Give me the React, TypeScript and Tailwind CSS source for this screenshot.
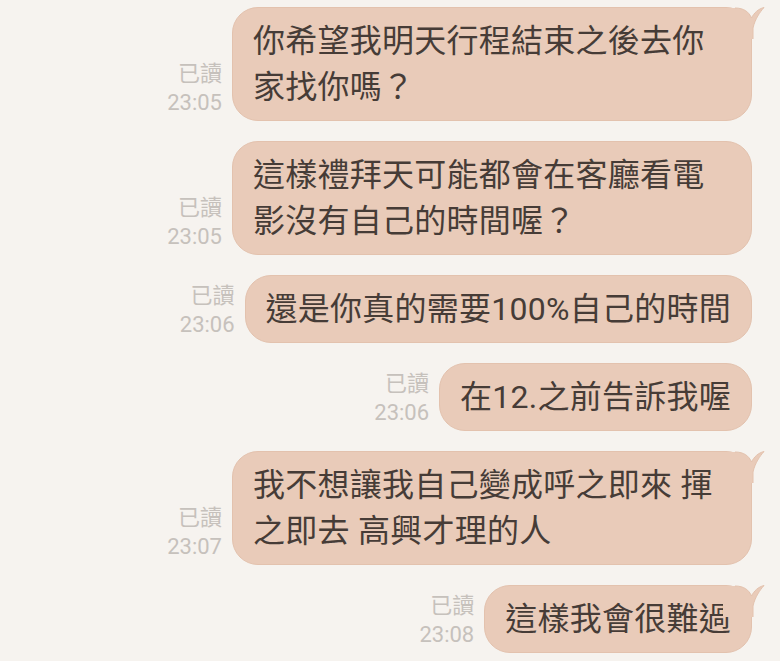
import React from "react";

type Msg = {
  text: string;
  time: string;
  tail: boolean;
};

const messages: Msg[] = [
  { text: "你希望我明天行程結束之後去你家找你嗎？", time: "23:05", tail: true },
  { text: "這樣禮拜天可能都會在客廳看電影沒有自己的時間喔？", time: "23:05", tail: false },
  { text: "還是你真的需要100%自己的時間", time: "23:06", tail: false },
  { text: "在12.之前告訴我喔", time: "23:06", tail: false },
  { text: "我不想讓我自己變成呼之即來 揮之即去 高興才理的人", time: "23:07", tail: true },
  { text: "這樣我會很難過", time: "23:08", tail: true },
];

// 右上のしっぽ
const Tail = () => (
  <svg
    className="absolute top-[-1px] right-[-14px] w-[42px] h-[32px]"
    viewBox="0 0 42 32"
  >
    <path
      d="M0 1 L12 1 C21 1 26 5 28.5 11 C31 6 35 2 41 0.5 C37 5 32 12 30 21 L30 32 L0 32 Z"
      fill="#e9cbb9"
    />
    <path
      d="M12 1 C21 1 26 5 28.5 11 C31 6 35 2 41 0.5 C37 5 32 12 30 21 L30 32"
      fill="none"
      stroke="#e3c2ae"
      strokeWidth="1"
    />
  </svg>
);

const Row = ({ msg }: { msg: Msg }) => {
  const { text, time, tail } = msg;
  return (
    <div className="flex justify-end items-end gap-[10px] pr-[28px]">
      <div className="flex flex-col items-end pb-[4px] text-[22px] leading-[29px] text-[#c6c1bc]">
        <span>已讀</span>
        <span>{time}</span>
      </div>
      <div className="relative max-w-[520px] rounded-[26px] border border-[#e3c2ae] bg-[#e9cbb9] px-[20px] py-[10px] text-[32px] leading-[46px] tracking-[0.25px] text-[#463c37]">
        {text}
        {tail && <Tail />}
      </div>
    </div>
  );
};

export default function App() {
  return (
    <div
      className="w-[780px] h-[661px] overflow-hidden bg-[#f6f3ef] pt-[7px]"
      style={{ fontFamily: '"Roboto", "Noto Sans CJK TC", sans-serif' }}
    >
      <div className="flex flex-col gap-[20px]">
        {messages.map((m, i) => (
          <Row key={i} msg={m} />
        ))}
      </div>
    </div>
  );
}
